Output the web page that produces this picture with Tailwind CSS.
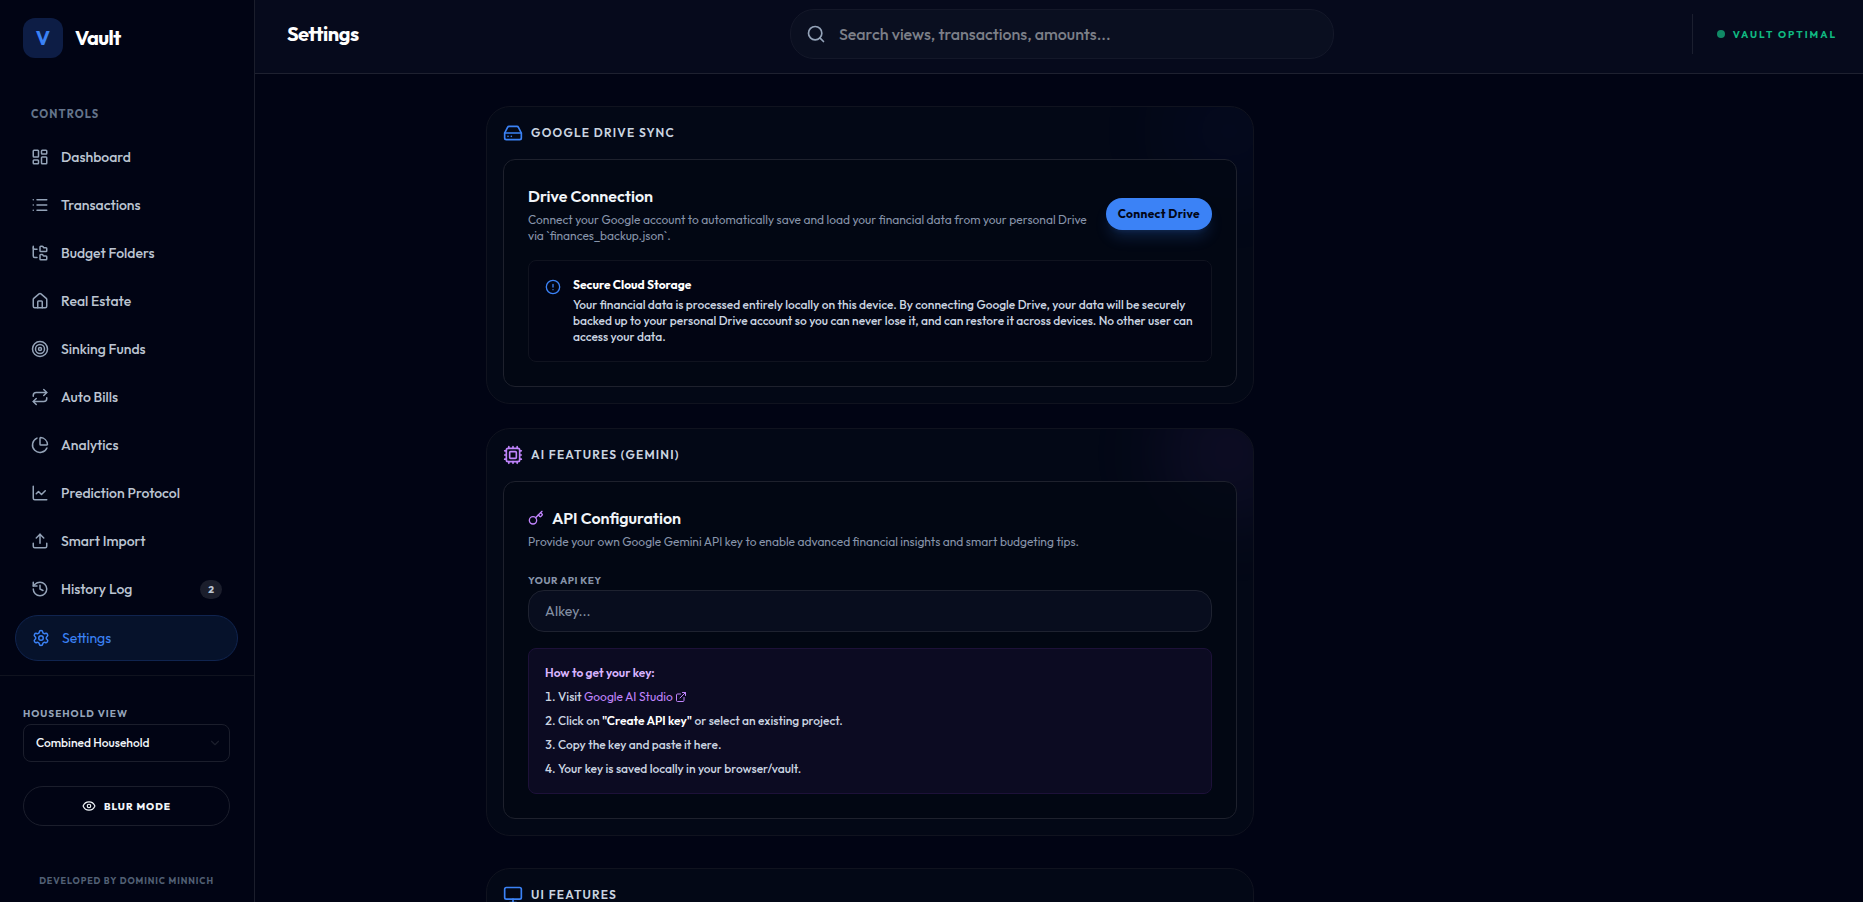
<!DOCTYPE html>
<html lang="en">
  <head>
    <meta charset="UTF-8" />
    <meta name="viewport" content="width=device-width, initial-scale=1.0" />
    <title>Vault - Settings</title>
    <script src="https://cdn.jsdelivr.net/npm/@tailwindcss/browser@4"></script>
  </head>
  <body
    class="flex h-screen overflow-hidden bg-[#010414] font-['Outfit',Lato,sans-serif] text-[#cbd5e1]"
  >
    <!-- Sidebar -->
    <aside class="flex w-[255px] shrink-0 flex-col border-r border-[#1b1e2c]">
      <div class="flex items-center gap-3 px-[23px] pt-[18px]">
        <div
          class="flex size-10 items-center justify-center rounded-xl bg-[#0d1d45] text-xl font-bold text-[#3b82f6]"
        >
          V
        </div>
        <span class="text-xl font-bold tracking-tight text-white">Vault</span>
      </div>

      <nav class="flex flex-1 flex-col gap-1 pt-12 pr-4 pl-[15px] text-sm font-medium text-[#bcc5d2]">
        <h2 class="mb-[9px] px-4 text-[11px] leading-4 font-bold tracking-widest text-[#64748b]">CONTROLS</h2>
        <a href="#dashboard" class="flex h-11 items-center gap-3 px-4 hover:text-white">
          <svg class="size-[18px] text-[#94a3b8]" viewBox="0 0 24 24" fill="none" stroke="currentColor" stroke-width="2" stroke-linecap="round" stroke-linejoin="round">
            <rect width="7" height="9" x="3" y="3" rx="1" />
            <rect width="7" height="5" x="14" y="3" rx="1" />
            <rect width="7" height="9" x="14" y="12" rx="1" />
            <rect width="7" height="5" x="3" y="16" rx="1" />
          </svg>
          Dashboard
        </a>
        <a href="#transactions" class="flex h-11 items-center gap-3 px-4 hover:text-white">
          <svg class="size-[18px] text-[#94a3b8]" viewBox="0 0 24 24" fill="none" stroke="currentColor" stroke-width="2" stroke-linecap="round" stroke-linejoin="round">
            <path d="M3 5h.01M3 12h.01M3 19h.01M8 5h13M8 12h13M8 19h13" />
          </svg>
          Transactions
        </a>
        <a href="#budget" class="flex h-11 items-center gap-3 px-4 hover:text-white">
          <svg class="size-[18px] text-[#94a3b8]" viewBox="0 0 24 24" fill="none" stroke="currentColor" stroke-width="2" stroke-linecap="round" stroke-linejoin="round">
            <path d="M20 10a1 1 0 0 0 1-1V6a1 1 0 0 0-1-1h-2.5a1 1 0 0 1-.8-.4l-.9-1.2A1 1 0 0 0 15 3h-2a1 1 0 0 0-1 1v5a1 1 0 0 0 1 1Z" />
            <path d="M20 21a1 1 0 0 0 1-1v-3a1 1 0 0 0-1-1h-2.9a1 1 0 0 1-.88-.55l-.42-.85a1 1 0 0 0-.92-.6H13a1 1 0 0 0-1 1v5a1 1 0 0 0 1 1Z" />
            <path d="M3 5a2 2 0 0 0 2 2h3" />
            <path d="M3 3v13a2 2 0 0 0 2 2h3" />
          </svg>
          Budget Folders
        </a>
        <a href="#real-estate" class="flex h-11 items-center gap-3 px-4 hover:text-white">
          <svg class="size-[18px] text-[#94a3b8]" viewBox="0 0 24 24" fill="none" stroke="currentColor" stroke-width="2" stroke-linecap="round" stroke-linejoin="round">
            <path d="M15 21v-8a1 1 0 0 0-1-1h-4a1 1 0 0 0-1 1v8" />
            <path d="M3 10a2 2 0 0 1 .709-1.528l7-6a2 2 0 0 1 2.582 0l7 6A2 2 0 0 1 21 10v9a2 2 0 0 1-2 2H5a2 2 0 0 1-2-2z" />
          </svg>
          Real Estate
        </a>
        <a href="#sinking-funds" class="flex h-11 items-center gap-3 px-4 hover:text-white">
          <svg class="size-[18px] text-[#94a3b8]" viewBox="0 0 24 24" fill="none" stroke="currentColor" stroke-width="2" stroke-linecap="round" stroke-linejoin="round">
            <circle cx="12" cy="12" r="10" />
            <circle cx="12" cy="12" r="6" />
            <circle cx="12" cy="12" r="2" />
          </svg>
          Sinking Funds
        </a>
        <a href="#auto-bills" class="flex h-11 items-center gap-3 px-4 hover:text-white">
          <svg class="size-[18px] text-[#94a3b8]" viewBox="0 0 24 24" fill="none" stroke="currentColor" stroke-width="2" stroke-linecap="round" stroke-linejoin="round">
            <path d="m17 2 4 4-4 4" />
            <path d="M3 11v-1a4 4 0 0 1 4-4h14" />
            <path d="m7 22-4-4 4-4" />
            <path d="M21 13v1a4 4 0 0 1-4 4H3" />
          </svg>
          Auto Bills
        </a>
        <a href="#analytics" class="flex h-11 items-center gap-3 px-4 hover:text-white">
          <svg class="size-[18px] text-[#94a3b8]" viewBox="0 0 24 24" fill="none" stroke="currentColor" stroke-width="2" stroke-linecap="round" stroke-linejoin="round">
            <path d="M21 12c.552 0 1.005-.449.95-.998a10 10 0 0 0-8.953-8.951c-.55-.055-.998.398-.998.95v8a1 1 0 0 0 1 1z" />
            <path d="M21.21 15.89A10 10 0 1 1 8 2.83" />
          </svg>
          Analytics
        </a>
        <a href="#prediction" class="flex h-11 items-center gap-3 px-4 hover:text-white">
          <svg class="size-[18px] text-[#94a3b8]" viewBox="0 0 24 24" fill="none" stroke="currentColor" stroke-width="2" stroke-linecap="round" stroke-linejoin="round">
            <path d="M3 3v16a2 2 0 0 0 2 2h16" />
            <path d="m19 9-5 5-4-4-3 3" />
          </svg>
          Prediction Protocol
        </a>
        <a href="#import" class="flex h-11 items-center gap-3 px-4 hover:text-white">
          <svg class="size-[18px] text-[#94a3b8]" viewBox="0 0 24 24" fill="none" stroke="currentColor" stroke-width="2" stroke-linecap="round" stroke-linejoin="round">
            <path d="M12 3v12" />
            <path d="m17 8-5-5-5 5" />
            <path d="M21 15v4a2 2 0 0 1-2 2H5a2 2 0 0 1-2-2v-4" />
          </svg>
          Smart Import
        </a>
        <a href="#history" class="flex h-11 items-center gap-3 px-4 hover:text-white">
          <svg class="size-[18px] text-[#94a3b8]" viewBox="0 0 24 24" fill="none" stroke="currentColor" stroke-width="2" stroke-linecap="round" stroke-linejoin="round">
            <path d="M3 12a9 9 0 1 0 9-9 9.75 9.75 0 0 0-6.74 2.74L3 8" />
            <path d="M3 3v5h5" />
            <path d="M12 7v5l4 2" />
          </svg>
          History Log
          <span class="ml-auto rounded-full bg-[#1b1e2c] px-2 text-[10px] leading-[19px] font-extrabold">2</span>
        </a>
        <a
          href="#settings"
          class="flex h-[46px] items-center gap-3 rounded-3xl border border-[#10244f] bg-[#06122b] px-4 font-normal text-[#3b82f6]"
        >
          <svg class="size-[18px]" viewBox="0 0 24 24" fill="none" stroke="currentColor" stroke-width="2" stroke-linecap="round" stroke-linejoin="round">
            <path d="M9.671 4.136a2.34 2.34 0 0 1 4.659 0 2.34 2.34 0 0 0 3.319 1.915 2.34 2.34 0 0 1 2.33 4.033 2.34 2.34 0 0 0 0 3.831 2.34 2.34 0 0 1-2.33 4.033 2.34 2.34 0 0 0-3.319 1.915 2.34 2.34 0 0 1-4.659 0 2.34 2.34 0 0 0-3.32-1.915 2.34 2.34 0 0 1-2.33-4.033 2.34 2.34 0 0 0 0-3.831A2.34 2.34 0 0 1 6.35 6.051a2.34 2.34 0 0 0 3.319-1.915" />
            <circle cx="12" cy="12" r="3" />
          </svg>
          Settings
        </a>
      </nav>

      <div class="border-t border-[#10131f] pt-8 pr-6 pb-[14px] pl-[23px]">
        <label for="household" class="mb-1 block text-[10px] leading-3 font-bold tracking-widest text-[#94a3b8]">HOUSEHOLD VIEW</label>
        <div class="relative">
          <select
            id="household"
            class="block h-[38px] w-full appearance-none rounded-lg border border-[#1b1e2c] bg-transparent px-3 text-xs font-medium text-slate-100"
          >
            <option>Combined Household</option>
          </select>
          <svg class="pointer-events-none absolute top-3 right-2 size-3.5 text-[#1b1e2c]" viewBox="0 0 24 24" fill="none" stroke="currentColor" stroke-width="2" stroke-linecap="round" stroke-linejoin="round">
            <path d="m6 9 6 6 6-6" />
          </svg>
        </div>
        <button
          type="button"
          class="mt-6 flex h-10 w-full items-center justify-center gap-2 rounded-full border border-[#1b1e2c] text-[10px] font-extrabold tracking-widest text-slate-100"
        >
          <svg class="size-3.5" viewBox="0 0 24 24" fill="none" stroke="currentColor" stroke-width="2" stroke-linecap="round" stroke-linejoin="round">
            <path d="M2.062 12.348a1 1 0 0 1 0-.696 10.75 10.75 0 0 1 19.876 0 1 1 0 0 1 0 .696 10.75 10.75 0 0 1-19.876 0" />
            <circle cx="12" cy="12" r="3" />
          </svg>
          BLUR MODE
        </button>
        <p class="mt-12 text-center text-[9px] leading-[14px] font-bold tracking-widest text-[#526075]">DEVELOPED BY DOMINIC MINNICH</p>
      </div>
    </aside>

    <div class="flex min-w-0 flex-1 flex-col">
      <!-- Header -->
      <header class="flex h-[74px] shrink-0 items-center border-b border-[#1e2130] bg-[#060a1c] pr-[26px] pb-[5px] pl-8">
        <h1 class="flex-1 text-xl font-bold tracking-tight text-white">Settings</h1>
        <div class="relative w-full max-w-[544px]">
          <svg class="absolute top-[15px] left-4 size-5 text-[#94a3b8]" viewBox="0 0 24 24" fill="none" stroke="currentColor" stroke-width="2" stroke-linecap="round" stroke-linejoin="round">
            <circle cx="11" cy="11" r="8" />
            <path d="m21 21-4.34-4.34" />
          </svg>
          <input
            type="search"
            aria-label="Search"
            placeholder="Search views, transactions, amounts..."
            class="block h-[50px] w-full rounded-3xl border border-[#141829] bg-[#0a0f20] pr-4 pl-12 text-base font-medium text-white placeholder:text-[#7c7f88]"
          />
        </div>
        <div class="flex flex-1 justify-end">
          <div class="flex h-10 items-center gap-2 border-l border-[#1b1f2f] pl-6 text-[10px] font-bold tracking-[2px] text-[#10b981]">
            <span class="size-2 rounded-full bg-[#108a66]"></span>
            VAULT OPTIMAL
          </div>
        </div>
      </header>

      <main class="flex-1 overflow-hidden pt-8">
        <div class="mx-auto max-w-[1146px]">
          <div class="max-w-3xl">
            <!-- Google Drive sync -->
            <section class="relative overflow-hidden rounded-3xl border border-[#10131f] bg-[#030816] p-4">
              <div class="absolute -top-10 -right-10 size-32 rounded-full bg-[#3b3bf6]/4 blur-2xl"></div>
              <h2 class="relative mb-4 flex h-5 items-center gap-2 text-xs font-semibold tracking-widest">
                <svg class="size-5 text-[#3b82f6]" viewBox="0 0 24 24" fill="none" stroke="currentColor" stroke-width="2" stroke-linecap="round" stroke-linejoin="round">
                  <path d="M22 12H2" />
                  <path d="M5.45 5.11 2 12v6a2 2 0 0 0 2 2h16a2 2 0 0 0 2-2v-6l-3.45-6.89A2 2 0 0 0 16.76 4H7.24a2 2 0 0 0-1.79 1.11z" />
                  <path d="M6 16h.01M10 16h.01" />
                </svg>
                GOOGLE DRIVE SYNC
              </h2>
              <div class="relative rounded-xl border border-[#1e212d] bg-[#020813]/80 p-6">
                <div class="flex items-center justify-between gap-4">
                  <div>
                    <h3 class="mb-1 text-base leading-6 font-semibold text-slate-100">Drive Connection</h3>
                    <p class="text-xs text-[#8794aa]">
                      Connect your Google account to automatically save and load your financial data from your personal Drive via `finances_backup.json`.
                    </p>
                  </div>
                  <button
                    type="button"
                    class="h-8 shrink-0 rounded-full bg-[#3b82f6] px-3 text-xs font-bold tracking-wide text-[#020617] shadow-lg shadow-[#3b82f6]/20"
                  >
                    Connect Drive
                  </button>
                </div>
                <div class="mt-4 flex gap-3 rounded-lg border border-[#10131f] bg-[#020513] p-4">
                  <svg class="mt-0.5 size-4 shrink-0 text-[#3b82f6]" viewBox="0 0 24 24" fill="none" stroke="currentColor" stroke-width="2" stroke-linecap="round" stroke-linejoin="round">
                    <circle cx="12" cy="12" r="10" />
                    <path d="M12 8v4M12 16h.01" />
                  </svg>
                  <div class="text-xs">
                    <p class="mb-1 font-bold text-white">Secure Cloud Storage</p>
                    <p class="font-medium">
                      Your financial data is processed entirely locally on this device. By connecting Google Drive, your data will be securely backed up to your personal Drive account so you can never lose it, and can restore it across devices. No other user can access your data.
                    </p>
                  </div>
                </div>
              </div>
            </section>

            <!-- AI features -->
            <section class="relative mt-6 overflow-hidden rounded-3xl border border-[#10131f] bg-[#030816] p-4">
              <div class="absolute -top-10 -right-10 size-32 rounded-full bg-[#a855f7]/8 blur-2xl"></div>
              <h2 class="relative mb-4 flex h-5 items-center gap-2 text-xs font-semibold tracking-widest">
                <svg class="size-5 text-[#c084fc]" viewBox="0 0 24 24" fill="none" stroke="currentColor" stroke-width="2" stroke-linecap="round" stroke-linejoin="round">
                  <path d="M12 20v2M12 2v2M17 20v2M17 2v2M2 12h2M2 17h2M2 7h2M20 12h2M20 17h2M20 7h2M7 20v2M7 2v2" />
                  <rect x="4" y="4" width="16" height="16" rx="2" />
                  <rect x="8" y="8" width="8" height="8" rx="1" />
                </svg>
                AI FEATURES (GEMINI)
              </h2>
              <div class="relative rounded-xl border border-[#1e212d] bg-[#020813]/80 p-6">
                <h3 class="mb-1 flex items-center gap-2 text-base leading-6 font-semibold text-slate-100">
                  <svg class="size-4 text-[#c084fc]" viewBox="0 0 24 24" fill="none" stroke="currentColor" stroke-width="2" stroke-linecap="round" stroke-linejoin="round">
                    <path d="m15.5 7.5 2.3 2.3a1 1 0 0 0 1.4 0l2.1-2.1a1 1 0 0 0 0-1.4L19 4" />
                    <path d="m21 2-9.6 9.6" />
                    <circle cx="7.5" cy="15.5" r="5.5" />
                  </svg>
                  API Configuration
                </h3>
                <p class="text-xs text-[#8794aa]">
                  Provide your own Google Gemini API key to enable advanced financial insights and smart budgeting tips.
                </p>
                <label for="api-key" class="mt-6 mb-0.5 block text-[10px] leading-3.5 font-bold tracking-wider text-[#8794aa]">YOUR API KEY</label>
                <input
                  type="password"
                  id="api-key"
                  placeholder="AIkey..."
                  class="block h-[42px] w-full rounded-2xl border border-[#1e2230] bg-[#080d1e] px-4 text-sm text-white placeholder:text-[#8490a4]"
                />
                <div class="mt-4 rounded-lg border border-[#1d1139] bg-[#0c0b22] p-4 text-xs font-medium">
                  <p class="mb-2 font-semibold text-[#d8b4fe]">How to get your key:</p>
                  <ol class="list-inside list-decimal space-y-2">
                    <li>
                      Visit
                      <a href="#ai-studio" class="font-normal text-[#c084fc] hover:underline">Google AI Studio
                        <svg class="inline size-3 align-[-2px]" viewBox="0 0 24 24" fill="none" stroke="currentColor" stroke-width="2" stroke-linecap="round" stroke-linejoin="round">
                          <path d="M15 3h6v6" />
                          <path d="M10 14 21 3" />
                          <path d="M18 13v6a2 2 0 0 1-2 2H5a2 2 0 0 1-2-2V8a2 2 0 0 1 2-2h6" />
                        </svg></a>
                    </li>
                    <li>Click on <strong class="font-semibold text-white">"Create API key"</strong> or select an existing project.</li>
                    <li>Copy the key and paste it here.</li>
                    <li>Your key is saved locally in your browser/vault.</li>
                  </ol>
                </div>
              </div>
            </section>

            <!-- UI features -->
            <section class="mt-8 rounded-t-3xl border border-[#10131f] bg-[#030816] p-4">
              <h2 class="flex h-5 items-center gap-2 text-xs font-semibold tracking-widest">
                <svg class="size-5 text-[#3b82f6]" viewBox="0 0 24 24" fill="none" stroke="currentColor" stroke-width="2" stroke-linecap="round" stroke-linejoin="round">
                  <rect width="20" height="14" x="2" y="3" rx="2" />
                  <path d="M8 21h8M12 17v4" />
                </svg>
                UI FEATURES
              </h2>
            </section>
          </div>
        </div>
      </main>
    </div>
  </body>
</html>
